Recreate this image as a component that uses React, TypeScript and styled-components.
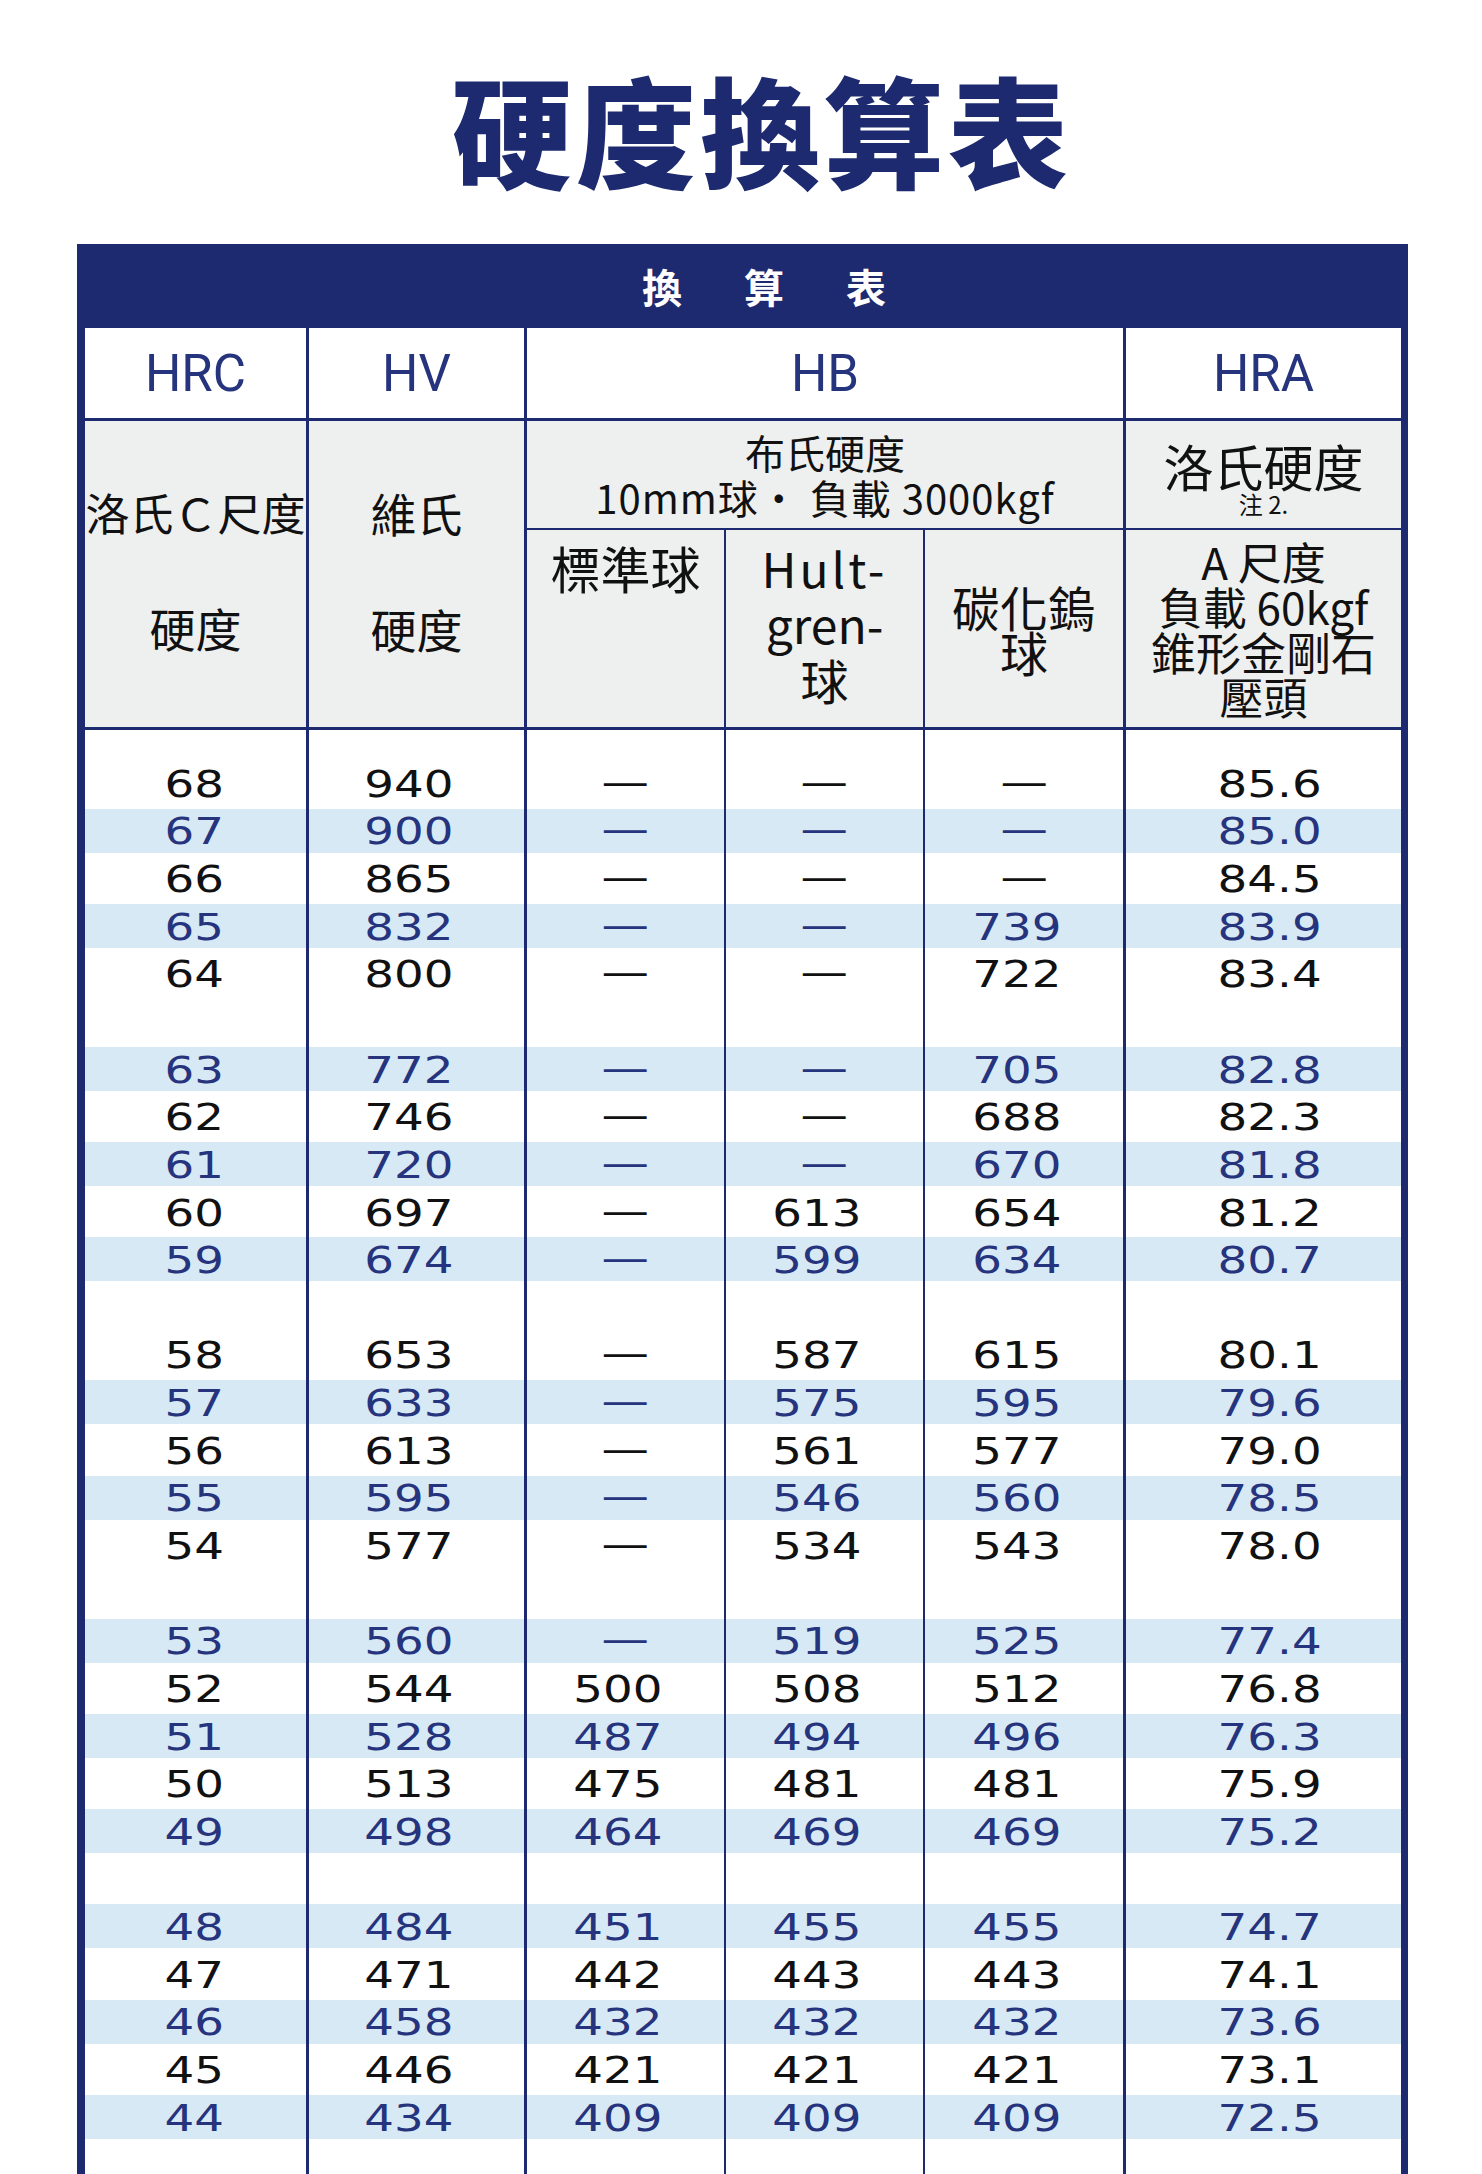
import React from "react";
import styled, { createGlobalStyle } from "styled-components";

const NAVY = "#1d2a70";
const INK_BLUE = "#26337d";
const STRIPE = "#d7e9f5";
const HEAD_GRAY = "#eef0ef";
const CJK = `"Noto Sans CJK TC", "Noto Sans CJK JP", sans-serif`;
const COLS = "224px 218px 199px 199px 201px 275px";
// right-hand rule width of each column
const LINES = [3, 3, 2, 2, 3, 0];
// the printed figures sit a little off the column centre
const NUDGE = [-3, -15, -15, -15, -15, 12];

const GlobalStyle = createGlobalStyle`
  html, body { margin: 0; padding: 0; background: #fff; }
  #root { height: 2174px; overflow: hidden; }
`;

const Page = styled.div`
  width: 1482px;
  height: 2174px;
  overflow: hidden;
  background: #fff;
  font-family: ${CJK};
`;

const Title = styled.h1`
  margin: 0;
  height: 244px;
  box-sizing: border-box;
  padding: 68px 0 0 42px;
  text-align: center;
  font-size: 120px;
  line-height: 120px;
  font-weight: 900;
  letter-spacing: 4px;
  color: ${NAVY};
`;

const Frame = styled.div`
  margin-left: 77px;
  width: 1331px;
  box-sizing: border-box;
  border-left: 8px solid ${NAVY};
  border-right: 7px solid ${NAVY};
`;

const Band = styled.div`
  height: 84px;
  background: ${NAVY};
  display: flex;
  align-items: center;
  justify-content: center;
  padding-left: 53px;
  color: #fff;
  font-size: 40px;
  font-weight: 700;
  letter-spacing: 11px;
`;

const HeadGrid = styled.div`
  display: grid;
  grid-template-columns: ${COLS};
  grid-template-rows: 93px 109px 200px;
`;

const HeadCell = styled.div<{
  $col: string;
  $row: string;
  $right: number;
  $bottom: number;
  $gray?: boolean;
  $justify?: string;
  $pad?: string;
}>`
  grid-column: ${(p) => p.$col};
  grid-row: ${(p) => p.$row};
  box-sizing: border-box;
  border-right: ${(p) => p.$right}px solid ${NAVY};
  border-bottom: ${(p) => p.$bottom}px solid ${NAVY};
  background: ${(p) => (p.$gray ? HEAD_GRAY : "#fff")};
  display: flex;
  flex-direction: column;
  align-items: center;
  justify-content: ${(p) => p.$justify ?? "center"};
  padding: ${(p) => p.$pad ?? "0"};
  text-align: center;
  color: #111;
`;

const ScaleName = styled.div`
  font-family: Roboto, "Liberation Sans", sans-serif;
  font-size: 51px;
  line-height: 1;
  color: ${INK_BLUE};
`;

const Label = styled.div<{ $size: number; $lh?: number; $ls?: number }>`
  font-size: ${(p) => p.$size}px;
  line-height: ${(p) => p.$lh ?? p.$size}px;
  letter-spacing: ${(p) => p.$ls ?? 0}px;
  white-space: nowrap;
`;

const TwoLine = styled.div`
  display: flex;
  flex-direction: column;
  align-items: center;
  gap: 70px;
`;

const Row = styled.div<{ $h: number }>`
  display: grid;
  grid-template-columns: ${COLS};
  height: ${(p) => p.$h}px;
`;

const Cell = styled.div<{ $line: number; $blue: boolean }>`
  box-sizing: border-box;
  border-right: ${(p) => p.$line}px solid ${NAVY};
  background: ${(p) =>
    p.$blue ? `linear-gradient(${STRIPE}, ${STRIPE}) center / 100% 44px no-repeat` : "transparent"};
  display: flex;
  align-items: center;
  justify-content: center;
  color: ${(p) => (p.$blue ? INK_BLUE : "#111")};
`;

const Num = styled.span<{ $nudge: number }>`
  display: inline-block;
  margin-top: 4px;
  margin-left: ${(p) => Math.max(p.$nudge, 0)}px;
  margin-right: ${(p) => Math.max(-p.$nudge, 0)}px;
  font-family: "DejaVu Sans", sans-serif;
  font-size: 36.5px;
  line-height: 1;
  transform: scaleX(1.28);
`;

const Dash = styled.span`
  display: inline-block;
  font-family: "DejaVu Sans", sans-serif;
  font-size: 36.5px;
  line-height: 1;
  transform: scaleX(1.3);
`;

type Entry = { v: string[]; blue: boolean } | null;

const raw: (string | null)[] = [
  "68 940 — — — 85.6",
  "67 900 — — — 85.0",
  "66 865 — — — 84.5",
  "65 832 — — 739 83.9",
  "64 800 — — 722 83.4",
  null,
  "63 772 — — 705 82.8",
  "62 746 — — 688 82.3",
  "61 720 — — 670 81.8",
  "60 697 — 613 654 81.2",
  "59 674 — 599 634 80.7",
  null,
  "58 653 — 587 615 80.1",
  "57 633 — 575 595 79.6",
  "56 613 — 561 577 79.0",
  "55 595 — 546 560 78.5",
  "54 577 — 534 543 78.0",
  null,
  "53 560 — 519 525 77.4",
  "52 544 500 508 512 76.8",
  "51 528 487 494 496 76.3",
  "50 513 475 481 481 75.9",
  "49 498 464 469 469 75.2",
  null,
  "48 484 451 455 455 74.7",
  "47 471 442 443 443 74.1",
  "46 458 432 432 432 73.6",
  "45 446 421 421 421 73.1",
  "44 434 409 409 409 72.5",
  null,
  null,
];

// odd HRC rows are shaded down to 49, then the last group flips to even rows
const rows: Entry[] = raw.map((r) => {
  if (!r) return null;
  const v = r.split(" ");
  const hrc = Number(v[0]);
  const blue = hrc > 48 ? hrc % 2 === 1 : hrc % 2 === 0;
  return { v, blue };
});

const EmptyRow = ({ h }: { h: number }) => (
  <Row $h={h}>
    {LINES.map((l, i) => (
      <Cell key={i} $line={l} $blue={false} />
    ))}
  </Row>
);

const App = () => (
  <Page>
    <GlobalStyle />
    <Title>硬度換算表</Title>
    <Frame>
      <Band>換　算　表</Band>
      <HeadGrid>
        <HeadCell $col="1" $row="1" $right={3} $bottom={3}>
          <ScaleName>HRC</ScaleName>
        </HeadCell>
        <HeadCell $col="2" $row="1" $right={3} $bottom={3}>
          <ScaleName>HV</ScaleName>
        </HeadCell>
        <HeadCell $col="3 / span 3" $row="1" $right={3} $bottom={3}>
          <ScaleName>HB</ScaleName>
        </HeadCell>
        <HeadCell $col="6" $row="1" $right={0} $bottom={3}>
          <ScaleName>HRA</ScaleName>
        </HeadCell>

        <HeadCell $col="1" $row="2 / span 2" $right={3} $bottom={3} $gray $pad="0 0 8px">
          <TwoLine>
            <Label $size={44}>洛氏Ｃ尺度</Label>
            <Label $size={46}>硬度</Label>
          </TwoLine>
        </HeadCell>
        <HeadCell $col="2" $row="2 / span 2" $right={3} $bottom={3} $gray $pad="0 0 8px">
          <TwoLine>
            <Label $size={46}>維氏</Label>
            <Label $size={46}>硬度</Label>
          </TwoLine>
        </HeadCell>
        <HeadCell $col="3 / span 3" $row="2" $right={3} $bottom={2} $gray>
          <Label $size={40} $lh={45}>布氏硬度</Label>
          <Label $size={40} $lh={45} $ls={1}>10mm球・ 負載 3000kgf</Label>
        </HeadCell>
        <HeadCell $col="6" $row="2" $right={0} $bottom={2} $gray $pad="8px 0 0">
          <Label $size={50}>洛氏硬度</Label>
          <Label $size={24} $lh={28}>注 2.</Label>
        </HeadCell>

        <HeadCell $col="3" $row="3" $right={2} $bottom={3} $gray $justify="flex-start" $pad="12px 0 0">
          <Label $size={50}>標準球</Label>
        </HeadCell>
        <HeadCell $col="4" $row="3" $right={2} $bottom={3} $gray $pad="0 0 12px">
          <Label $size={48} $lh={56} $ls={3}>Hult-</Label>
          <Label $size={48} $lh={56}>gren-</Label>
          <Label $size={48} $lh={56}>球</Label>
        </HeadCell>
        <HeadCell $col="5" $row="3" $right={3} $bottom={3} $gray>
          <Label $size={48} $lh={45}>碳化鎢</Label>
          <Label $size={48} $lh={45}>球</Label>
        </HeadCell>
        <HeadCell $col="6" $row="3" $right={0} $bottom={3} $gray>
          <Label $size={44} $lh={45}>A 尺度</Label>
          <Label $size={44} $lh={45}>負載 60kgf</Label>
          <Label $size={45} $lh={45}>錐形金剛石</Label>
          <Label $size={44} $lh={45}>壓頭</Label>
        </HeadCell>
      </HeadGrid>

      <EmptyRow h={29.2} />
      {rows.map((r, i) =>
        r ? (
          <Row key={i} $h={47.65}>
            {r.v.map((val, c) => (
              <Cell key={c} $line={LINES[c]} $blue={r.blue}>
                {val === "—" ? <Dash>—</Dash> : <Num $nudge={NUDGE[c]}>{val}</Num>}
              </Cell>
            ))}
          </Row>
        ) : (
          <EmptyRow key={i} h={47.65} />
        )
      )}
    </Frame>
  </Page>
);

export default App;
